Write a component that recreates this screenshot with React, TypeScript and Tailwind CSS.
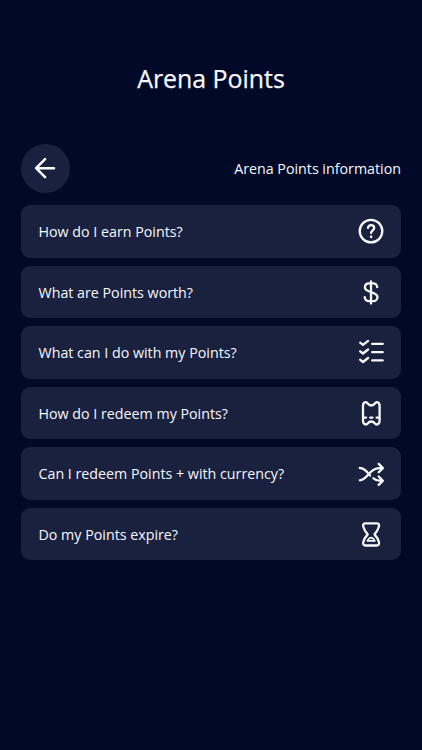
import type { ReactNode } from "react";

function Icon({ children }: { children: ReactNode }) {
  return (
    <svg className="h-7 w-7 shrink-0" viewBox="0 0 28 28" fill="none" stroke="currentColor" strokeWidth="2.3" strokeLinecap="round" strokeLinejoin="round">
      {children}
    </svg>
  );
}

const items: { label: string; icon: ReactNode }[] = [
  {
    label: "How do I earn Points?",
    icon: (
      <>
        <circle cx="14" cy="14.1" r="11.3" />
        <path d="M11 10.9c.2-1.9 1.4-2.8 3.1-2.8 1.9 0 3.1 1.2 3.1 2.8 0 2.4-3.1 2.6-3.1 5.1" />
        <circle cx="14.1" cy="19.8" r="0.7" fill="currentColor" strokeWidth="1.3" />
      </>
    ),
  },
  {
    label: "What are Points worth?",
    icon: <path d="M14 3.3v22.2M20.2 9.2c0-2.4-1.8-3.9-4.2-3.9h-3.7C9.7 5.3 7.9 7 7.9 9.4c0 5.3 12.6 4 12.6 9.5 0 2.5-1.9 4.3-4.4 4.3h-3.9c-2.6 0-4.4-1.6-4.4-4" />,
  },
  {
    label: "What can I do with my Points?",
    icon: <path d="M3.2 4.7l2.8 2.2 5.1-4M3.2 13.3l2.8 2.2 5.1-4M3.2 21.8l2.8 2.2 5.1-4M15.2 5.9h10.5M15.2 14.2h10.5M15.2 22.4h10.5" />,
  },
  {
    label: "How do I redeem my Points?",
    icon: (
      <>
        <path d="M9.200 3.200C10.500 3.200 10.800 6.500 14.300 6.500S18.100 3.200 19.400 3.200c2 0 3.200 1.700 3.200 3.600v14.800c0 2.200-1.300 3.900-3.200 3.900-1.500 0-1.600-3-5.100-3s-3.600 3-5.100 3c-1.900 0-3.200-1.700-3.200-3.900V6.800c0-1.900 1.200-3.600 3.200-3.600Z" />
        <path strokeWidth="2.1" d="M6.500 18.600h2.700M13.100 18.600h2.400M19.500 18.600h2.500" />
      </>
    ),
  },
  {
    label: "Can I redeem Points + with currency?",
    icon: <path d="M2.800 8c5.200 0 7.700 4.300 10.300 7.500M16.400 18.200c1.700 1.700 3.600 2.500 6.100 2.500h3M2.800 20.300C10.600 20.300 12 8.100 22 8.100h3.500M21.700 3.900l4.200 4.200-4.200 4.200M21.700 16.500l4.200 4.200-4.200 4.200" />,
  },
  {
    label: "Do my Points expire?",
    icon: (
      <>
        <path d="M8.500 3.300h11.200c1.900 0 2.700 1.400 2.300 3-.8 3.200-2.300 5.700-4.500 8.100 2.200 2.400 3.700 4.600 4.500 7.800.4 1.900-.5 3.300-2.300 3.300H8.500c-1.800 0-2.700-1.400-2.300-3.300.8-3.200 2.300-5.400 4.500-7.800C8.500 12 7 9.500 6.200 6.300c-.4-1.600.4-3 2.300-3Z" />
        <path strokeWidth="1.9" d="M10.500 20.900c.8-1.700 2-3.300 3.600-3.300s2.800 1.600 3.600 3.300Z" />
      </>
    ),
  },
];

export default function App() {
  return (
    <main className="h-[750px] w-full overflow-hidden bg-[#000927] px-[21px] pt-[60px] font-['Open_Sans','Noto_Sans',sans-serif] text-[#f7f8fc]">
      <h1 className="text-center text-[24.9px] leading-9 [-webkit-text-stroke:0.25px_currentColor]">Arena Points</h1>
      <header className="mt-[47.5px] flex items-center justify-between">
        <button aria-label="Back" className="flex h-[49px] w-[49px] items-center justify-center rounded-full bg-[#1a213f] pr-px text-white">
          <svg className="h-6 w-6" viewBox="0 0 24 24" fill="none" stroke="currentColor" strokeWidth="2.5" strokeLinecap="round" strokeLinejoin="round">
            <path d="M21 12.2H3.2M12.1 3.2l-9 9 9 9" />
          </svg>
        </button>
        <p className="pt-0.5 text-[14.25px] leading-5">Arena Points information</p>
      </header>
      <ul className="mt-[12.5px] flex flex-col gap-[8.1px]">
        {items.map((item) => (
          <li key={item.label}>
            <button className="flex h-[52.5px] w-full items-center justify-between rounded-[9px] bg-[#1a213f] pr-4 pl-[17.5px] text-left text-[14.25px]">
              <span className="pt-px">{item.label}</span>
              <Icon>{item.icon}</Icon>
            </button>
          </li>
        ))}
      </ul>
    </main>
  );
}
